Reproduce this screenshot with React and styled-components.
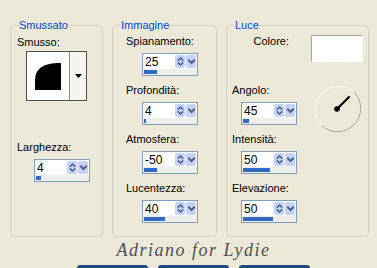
import styled, { createGlobalStyle } from "styled-components"

const GlobalStyle = createGlobalStyle`
  html, body {
    margin: 0;
    padding: 0;
    background: #ece9d8;
  }
  body {
    font-family: "Liberation Sans", Arial, sans-serif;
    font-size: 11px;
    color: #000;
  }
`

const immagine = [
    { label: "Spianamento:", value: "25", fill: 13 },
    { label: "Profondità:", value: "4", fill: 2 },
    { label: "Atmosfera:", value: "-50", fill: 13 },
    { label: "Lucentezza:", value: "40", fill: 21 },
]

function Spin({ value, fill, indent }) {
    return (
        <SpinBox $indent={indent}>
            <SpinTop>
                <SpinValue>{value}</SpinValue>
                <SpinButton>
                    <svg width="9" height="11" viewBox="0 0 9 11">
                        <path d="M1.8 4.6 L4.5 2 L7.2 4.6 M1.8 6.4 L4.5 9 L7.2 6.4" fill="none" stroke="#4d6185" strokeWidth="1.5" />
                    </svg>
                </SpinButton>
                <SpinButton>
                    <svg width="9" height="11" viewBox="0 0 9 11">
                        <path d="M1.3 3.8 L4.5 7 L7.7 3.8" fill="none" stroke="#4d6185" strokeWidth="2" />
                    </svg>
                </SpinButton>
            </SpinTop>
            <SpinStrip>
                <SpinBar style={{ width: fill }} />
            </SpinStrip>
        </SpinBox>
    )
}

function Field({ label, value, fill, indent }) {
    return (
        <FieldBox>
            <Label>{label}</Label>
            <Spin value={value} fill={fill} indent={indent} />
        </FieldBox>
    )
}

export default function App() {
    return (
        <Page>
            <GlobalStyle />
            <Groups>
                <Group $width={93}>
                    <GroupTitle>Smussato</GroupTitle>
                    <SmussoContent>
                        <Label>Smusso:</Label>
                        <Preview>
                            <PreviewArea>
                                <svg width="42" height="48" viewBox="0 0 42 48">
                                    <path d="M8 38 L8 28 Q8 12 30 11 L34 11 L34 38 Z" fill="#000" />
                                </svg>
                            </PreviewArea>
                            <DropButton>
                                <svg width="7" height="4" viewBox="0 0 7 4">
                                    <path d="M0 0 L7 0 L3.5 4 Z" fill="#000" />
                                </svg>
                            </DropButton>
                        </Preview>
                        <LarghezzaField>
                            <Label>Larghezza:</Label>
                            <Spin value="4" fill={5} indent={17} />
                        </LarghezzaField>
                    </SmussoContent>
                </Group>

                <Group $width={105}>
                    <GroupTitle>Immagine</GroupTitle>
                    <Column>
                        {immagine.map((f) => (
                            <Field key={f.label} {...f} indent={16} />
                        ))}
                    </Column>
                </Group>

                <Group $width={143}>
                    <GroupTitle>Luce</GroupTitle>
                    <LuceGrid>
                        <ColorRow>
                            <Label>Colore:</Label>
                            <Swatch />
                        </ColorRow>
                        <Field label="Angolo:" value="45" fill={6} indent={9} />
                        <Dial>
                            <svg width="48" height="48" viewBox="0 0 48 48">
                                <path d="M7.4 40.6 A23.5 23.5 0 0 1 40.6 7.4" fill="none" stroke="#fff" strokeWidth="1" />
                                <path d="M40.6 7.4 A23.5 23.5 0 0 1 7.4 40.6" fill="none" stroke="#a7a69a" strokeWidth="1" />
                                <line x1="23" y1="24" x2="35" y2="12" stroke="#000" strokeWidth="2.2" strokeLinecap="round" />
                                <circle cx="23" cy="24" r="2.8" fill="#000" />
                            </svg>
                        </Dial>
                        <Field label="Intensità:" value="50" fill={27} indent={9} />
                        <Spacer />
                        <Field label="Elevazione:" value="50" fill={30} indent={9} />
                    </LuceGrid>
                </Group>
            </Groups>

            <Signature>Adriano for Lydie</Signature>

            <Buttons>
                <Button />
                <Button />
                <Button />
            </Buttons>
        </Page>
    )
}

const Page = styled.div`
    width: 377px;
    height: 268px;
    overflow: hidden;
    display: flex;
    flex-direction: column;
`

const Groups = styled.div`
    display: flex;
    gap: 9px;
    padding: 25px 0 0 10px;
`

const Group = styled.div`
    position: relative;
    box-sizing: border-box;
    width: ${(p) => p.$width}px;
    height: 212px;
    border: 1px solid #d0d0bf;
    border-radius: 4px;
`

const GroupTitle = styled.span`
    position: absolute;
    top: -7px;
    left: 7px;
    padding: 0 1px;
    background: #ece9d8;
    color: #0046d5;
    line-height: 13px;
`

const Label = styled.div`
    line-height: 13px;
    white-space: nowrap;
`

const SmussoContent = styled.div`
    display: flex;
    flex-direction: column;
    align-items: flex-start;
    padding: 10px 0 0 6px;
`

const Preview = styled.div`
    display: flex;
    box-sizing: border-box;
    width: 61px;
    height: 50px;
    margin: 2px 0 0 9px;
    border: 1px solid #4e4e4e;
    background: #fff;
`

const PreviewArea = styled.div`
    flex: 1;
    display: flex;
`

const DropButton = styled.div`
    width: 17px;
    display: flex;
    align-items: center;
    justify-content: center;
    border-left: 1px solid #8c8c8c;
    background: #f5f4ef;
`

const LarghezzaField = styled.div`
    display: flex;
    flex-direction: column;
    align-items: flex-start;
    gap: 5px;
    margin-top: 40px;
`

const Column = styled.div`
    display: flex;
    flex-direction: column;
    gap: 8px;
    padding: 9px 0 0 13px;
`

const FieldBox = styled.div`
    display: flex;
    flex-direction: column;
    align-items: flex-start;
    gap: 5px;
`

const LuceGrid = styled.div`
    display: grid;
    grid-template-columns: auto 1fr;
    grid-template-rows: repeat(4, 41px);
    row-gap: 8px;
    padding: 9px 5px 0 5px;
`

const ColorRow = styled.div`
    grid-column: 1 / 3;
    display: flex;
    justify-content: flex-end;
    align-items: flex-start;
    gap: 22px;
`

const Swatch = styled.div`
    box-sizing: border-box;
    width: 52px;
    height: 27px;
    background: #fff;
    border: 1px solid;
    border-color: #a5a497 #fdfdfa #fdfdfa #a5a497;
`

const Dial = styled.div`
    justify-self: end;
    margin: 1px 1px 0 0;
    height: 48px;
`

const Spacer = styled.div``

const SpinBox = styled.div`
    box-sizing: border-box;
    width: 56px;
    height: 23px;
    margin-left: ${(p) => p.$indent}px;
    border: 1px solid #7f9db9;
    background: #fff;
    display: grid;
    grid-template-rows: 15px 6px;
`

const SpinTop = styled.div`
    display: flex;
    align-items: center;
    gap: 1px;
    padding-right: 1px;
`

const SpinValue = styled.span`
    flex: 1;
    padding-left: 2px;
    font-size: 12px;
    line-height: 14px;
`

const SpinButton = styled.div`
    width: 10px;
    height: 13px;
    display: flex;
    align-items: center;
    justify-content: center;
    background: #c3d3fb;
    border-radius: 2px;
`

const SpinStrip = styled.div`
    background: #efeee8;
    padding: 1px;
`

const SpinBar = styled.div`
    height: 4px;
    background: #316ac5;
`

const Signature = styled.div`
    margin-top: 3px;
    padding-left: 10px;
    text-align: center;
    font-family: "Liberation Serif", "Times New Roman", serif;
    font-style: italic;
    font-size: 18px;
    line-height: 20px;
    letter-spacing: 1.5px;
    color: #505050;
`

const Buttons = styled.div`
    display: flex;
    gap: 10px;
    margin-top: 5px;
    padding-left: 77px;
`

const Button = styled.div`
    flex: none;
    width: 71px;
    height: 23px;
    border-radius: 3px;
    background: #1f4c7c;
`
